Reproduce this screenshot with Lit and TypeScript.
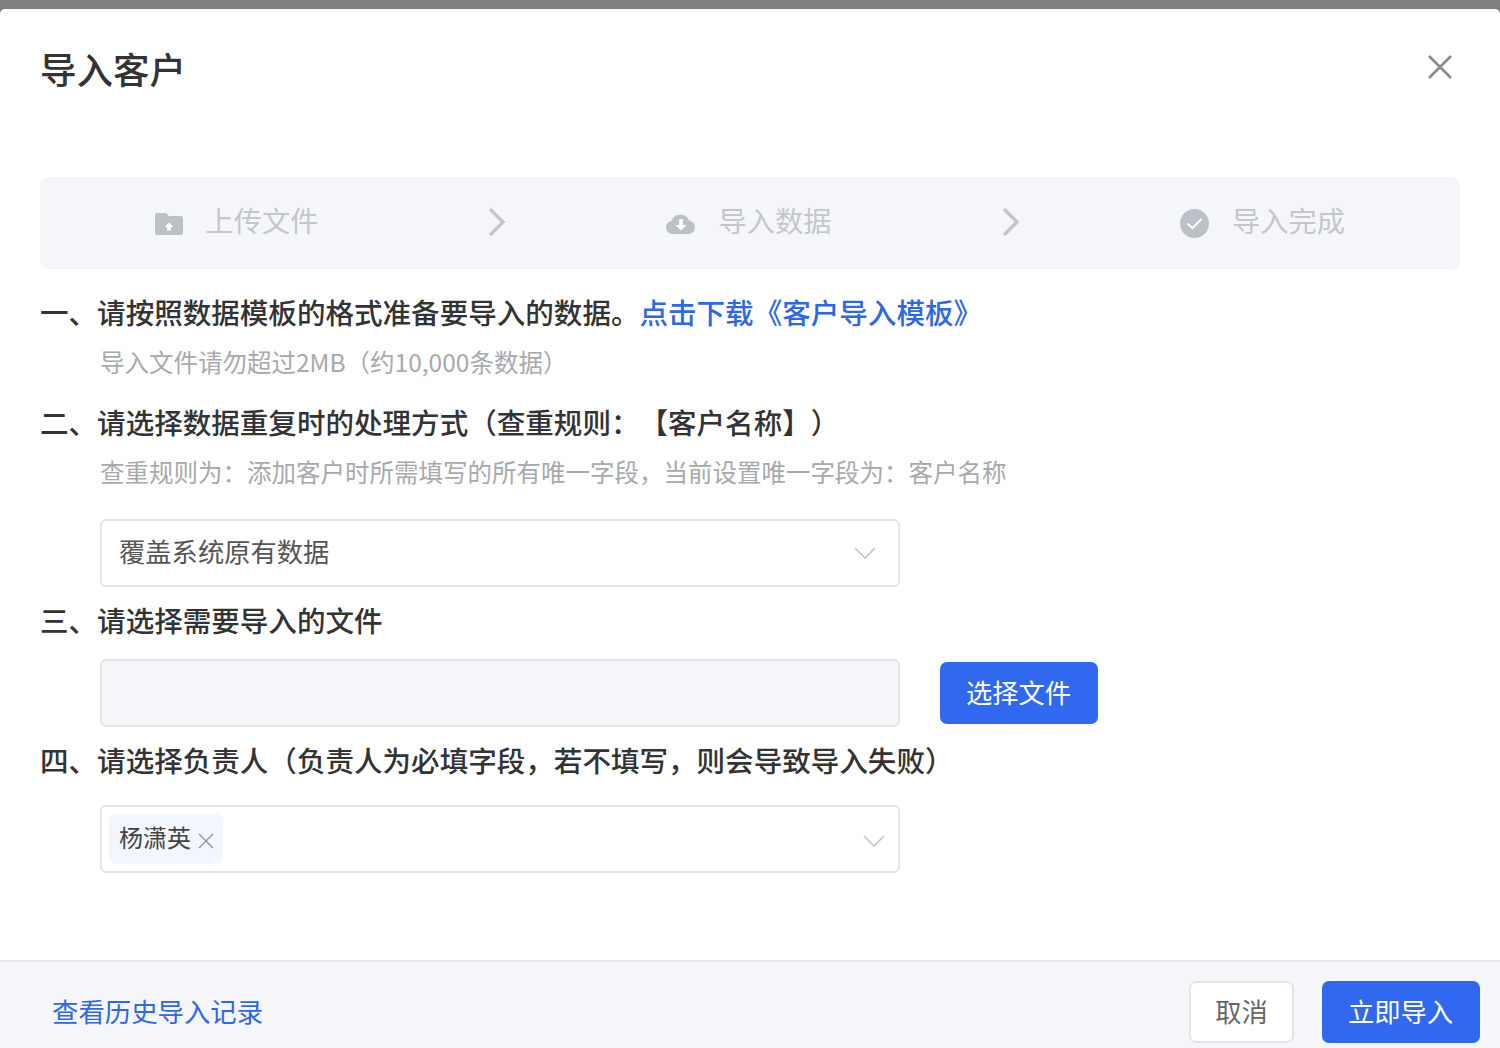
import { LitElement, html, css } from "lit";
import { customElement } from "lit/decorators.js";

@customElement("app-root")
export class AppRoot extends LitElement {
  static styles = css`
    :host { display: block; height: 1048px; box-sizing: border-box; padding-top: 9px; background: #7f7f7f; overflow: hidden;
      font-family: "Noto Sans CJK SC", "Noto Sans", sans-serif; color: #333; text-spacing-trim: space-all; }
    .modal { height: 1039px; background: #fff; border-radius: 5px 5px 0 0; display: flex; flex-direction: column; box-sizing: border-box; }
    .header { height: 122px; padding: 33px 40px 0; box-sizing: border-box; display: flex; justify-content: space-between; align-items: flex-start; }
    .title { font-size: 36.5px; line-height: 54px; font-weight: 500; color: #333; margin: 0; }
    .close { margin: 12px 7px 0 0; width: 26px; height: 26px; display: block; }
    .body { padding: 46px 40px 0; flex: 1; }
    .steps { height: 92px; background: #f5f6f9; border-radius: 8px; display: grid; grid-template-columns: 392px 122px 392px 122px 392px; align-items: center; }
    .step { display: flex; align-items: center; justify-content: center; gap: 23px; font-size: 28.2px; line-height: 40px; color: #c4c6cc; padding-right: 3px; }
    .step.first { gap: 23px; padding-right: 0; padding-left: 1px; }
    .step span { padding-bottom: 6px; }
    .step svg { display: block; flex: none; margin-top: 1px; }
    .arrow { display: flex; justify-content: center; padding-left: 8px; padding-bottom: 2px; }
    .line { font-size: 28.56px; line-height: 40px; font-weight: 500; color: #333; white-space: nowrap; }
    .line a { color: #2e67e8; text-decoration: none; }
    .sub { font-size: 24.5px; line-height: 40px; color: #a8a9ad; padding-left: 60px; white-space: nowrap; }
    .l1 { margin-top: 23px; } .s1 { margin-top: 10px; } .l2 { margin-top: 20px; } .s2 { margin-top: 10px; }
    .l3, .l4 { margin-top: 13px; }
    .row { display: flex; align-items: center; margin-left: 60px; gap: 40px; }
    .box { width: 800px; height: 68px; box-sizing: border-box; border: 2px solid #e4e5e8; border-radius: 6px; background: #fff; display: flex; align-items: center; justify-content: space-between; }
    .r1 { margin-top: 27px; } .r2 { margin-top: 19px; } .r3 { margin-top: 25px; }
    .sel { padding: 0 22px 0 17px; font-size: 26.3px; color: #555; }
    .sel > span:first-child { padding-bottom: 6px; }
    .sel.multi { padding: 0 5px 0 7px; }
    .dis { background: #f5f6f9; }
    .tag { height: 50px; width: 114px; box-sizing: border-box; padding-left: 10px; border-radius: 7px; background: #f3f6fd; display: flex; align-items: center; gap: 7px; font-size: 24px; color: #444; }
    .tag span { padding-bottom: 6px; }
    .btn { width: 158px; height: 62px; border: none; border-radius: 7px; background: #3068f0; color: #fff; font: inherit; font-size: 26.3px; padding: 0 1px 4px 0; display: flex; align-items: center; justify-content: center; box-sizing: border-box; }
    .btn.ghost { width: 105px; background: #fff; border: 2px solid #e4e5e8; color: #666; padding: 0 0 3px; }
    .footer { height: 88px; box-sizing: border-box; background: #f5f6f9; border-top: 2px solid #e6e7ea; padding: 19px 20px 0 52px; margin-top: -1px; display: flex; justify-content: space-between; align-items: flex-start; }
    .history { font-size: 26.4px; line-height: 60px; color: #2e67e8; text-decoration: none; }
    .actions { display: flex; gap: 28px; }
    .multi-chevron { margin-right: 8px; display: flex; margin-top: 4px; }
    .tag svg { margin-top: 4px; }
  `;

  chevron(w = 22) {
    return html`<svg width="${w}" height="14" viewBox="0 0 22 14" fill="none"><path d="M1 2l10 10L21 2" stroke="#c4c6cc" stroke-width="1.6"/></svg>`;
  }
  arrow() {
    return html`<div class="arrow"><svg width="20" height="30" viewBox="0 0 20 30" fill="none"><path d="M3 2l13 13L3 28" stroke="#c4c6cc" stroke-width="3.4"/></svg></div>`;
  }

  render() {
    return html`<div class="modal">
      <div class="header">
        <h1 class="title">导入客户</h1>
        <svg class="close" viewBox="0 0 26 26" fill="none"><path d="M2 2l22 22M24 2L2 24" stroke="#8c8c8f" stroke-width="2.6"/></svg>
      </div>
      <div class="body">
        <div class="steps">
          <div class="step first">
            <svg width="28" height="22" viewBox="0 0 28 22"><path d="M0 2a2 2 0 0 1 2-2h9l3 3h12a2 2 0 0 1 2 2v15a2 2 0 0 1-2 2H2a2 2 0 0 1-2-2z" fill="#bec0c7"/><path d="M14 9.500l4.500 4.500H16v3.500h-4V14H9.500z" fill="#fff"/></svg>
            <span>上传文件</span>
          </div>
          ${this.arrow()}
          <div class="step">
            <svg width="30" height="21" viewBox="0 0 30 21"><path d="M7 21a6.500 6.500 0 0 1-1.500-12.900A9 8 0 0 1 23 7.500 6.800 6.800 0 0 1 23 21z" fill="#bec0c7"/><path d="M13.200 6h3.600v6h3.700L15 17.500 9.500 12h3.700z" fill="#fff"/></svg>
            <span>导入数据</span>
          </div>
          ${this.arrow()}
          <div class="step">
            <svg width="29" height="29" viewBox="0 0 29 29"><circle cx="14.500" cy="14.500" r="14.500" fill="#bec0c7"/><path d="M7.500 14.500l5 4.500 9-9" fill="none" stroke="#fff" stroke-width="2"/></svg>
            <span>导入完成</span>
          </div>
        </div>
        <div class="line l1">一、请按照数据模板的格式准备要导入的数据。<a>点击下载《客户导入模板》</a></div>
        <div class="sub s1">导入文件请勿超过2MB（约10,000条数据）</div>
        <div class="line l2">二、请选择数据重复时的处理方式（查重规则：【客户名称】）</div>
        <div class="sub s2">查重规则为：添加客户时所需填写的所有唯一字段，当前设置唯一字段为：客户名称</div>
        <div class="row r1"><div class="box sel"><span>覆盖系统原有数据</span>${this.chevron()}</div></div>
        <div class="line l3">三、请选择需要导入的文件</div>
        <div class="row r2"><div class="box dis"></div><button class="btn">选择文件</button></div>
        <div class="line l4">四、请选择负责人（负责人为必填字段，若不填写，则会导致导入失败）</div>
        <div class="row r3"><div class="box sel multi">
          <div class="tag"><span>杨潇英</span><svg width="16" height="16" viewBox="0 0 16 16" fill="none"><path d="M1 1l14 14M15 1L1 15" stroke="#8f9094" stroke-width="1.300"/></svg></div>
          <span class="multi-chevron">${this.chevron()}</span>
        </div></div>
      </div>
      <div class="footer">
        <a class="history">查看历史导入记录</a>
        <div class="actions"><button class="btn ghost">取消</button><button class="btn">立即导入</button></div>
      </div>
    </div>`;
  }
}
